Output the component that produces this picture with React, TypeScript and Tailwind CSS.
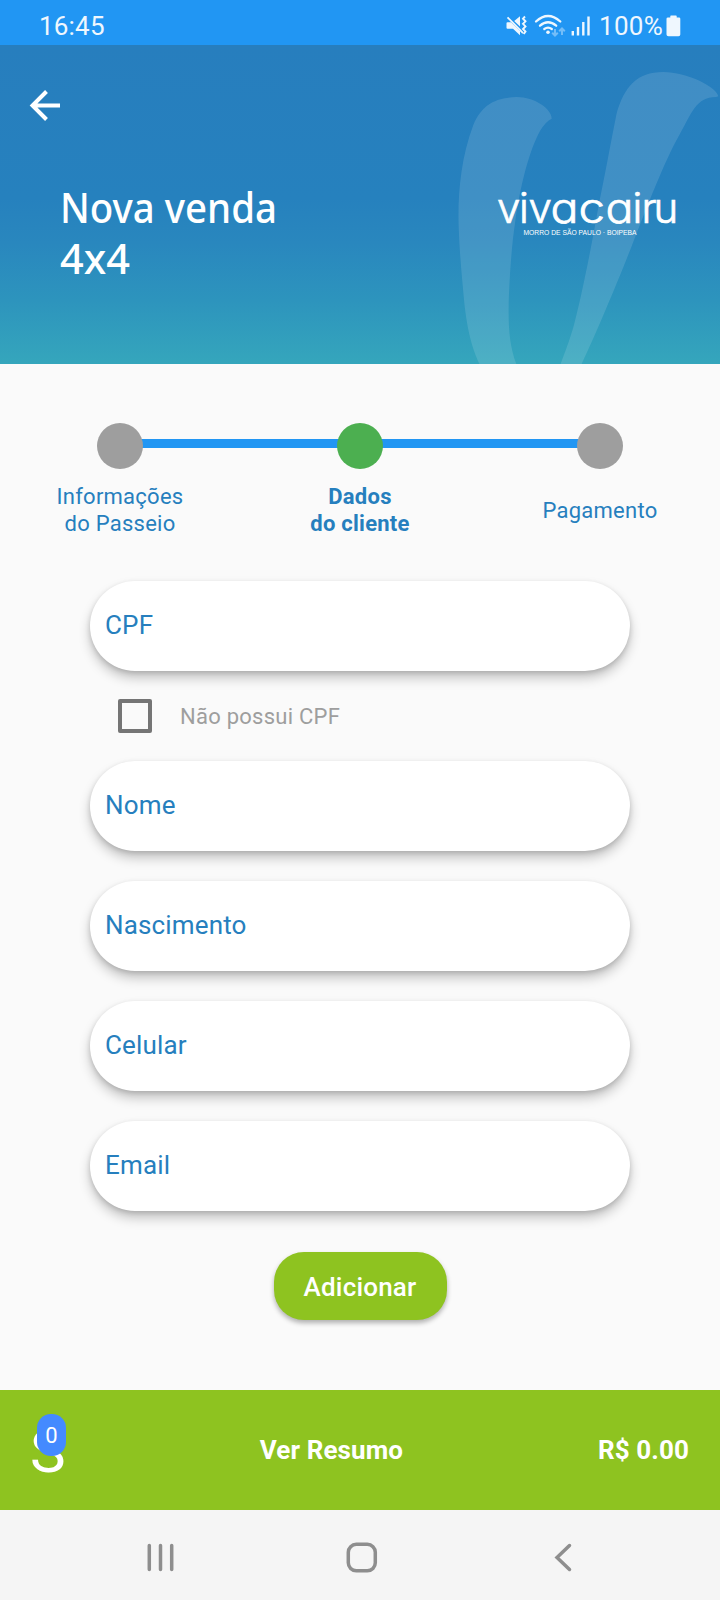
import React from "react";

function StatusBar() {
  return (
    <div className="flex h-[45px] items-start justify-between bg-[#2196f3] pl-[39px] pr-[38px] text-[#eff7fe]">
      <span className="mt-[10px] text-[26px] leading-[32px] tracking-[0.2px]">16:45</span>
      <div className="flex items-start">
        <svg className="h-[45px] w-[94px]" viewBox="0 0 94 45">
          <path fill="currentColor" d="M2.500 22.200h3.500L15 31v4.300l-7-6.500H2.500q-1 0-1-1v-4.600q0-1 1-1M9.200 21l5.800-4.700v10.200z" />
          <path d="M2.500 17.300 15 29.800l3 3.400" fill="none" stroke="currentColor" strokeWidth="1.800" />
          <path d="m20 16.500-2 2.200 2.500 2.600-2.500 2.500 2.500 2.600-2.500 2.600 2.500 2.500-1.800 2.500" fill="none" stroke="currentColor" strokeWidth="1.900" />
          <g fill="none" stroke="currentColor" strokeWidth="2.300" strokeLinecap="round">
            <path d="M31 21.500Q43 10.500 55.300 21.500M35 25.700q8-6.800 16.200 0M39.300 29q3.700-2.600 7.500 0" />
          </g>
          <circle cx="43" cy="32.300" r="1.800" fill="currentColor" />
          <path d="M50 29v6.500m-2.800-2.800 2.800 2.800 2.800-2.800M57 35v-6.500m-2.800 2.800 2.800-2.800 2.800 2.800" fill="none" stroke="currentColor" strokeWidth="2" opacity=".4" />
          <path d="M67.800 31v4.500M73 27v8.500M78.300 22v13.500M83.500 16.500v19" stroke="currentColor" strokeWidth="2.400" fill="none" />
        </svg>
        <span className="mt-[10px] w-[67px] whitespace-nowrap text-[26px] leading-[32px] tracking-[0.3px]">100%</span>
        <svg className="mr-[1px] mt-[15px] h-[22px] w-[15px]" viewBox="0 0 15 22">
          <path fill="currentColor" d="M5 .5h5q.7 0 .7.700V2.500H13q1.300 0 1.300 1.300v15.700q0 1.800-1.800 1.800h-10Q.5 21.300.5 19.500V3.800Q.5 2.500 2 2.500h2.300V1.200Q4.300.5 5 .5" />
        </svg>
      </div>
    </div>
  );
}

function Header() {
  return (
    <header className="relative h-[319px] overflow-hidden bg-[linear-gradient(180deg,#277ebe_0%,#2681be_48%,#2987be_62%,#2d94bd_80%,#35a6bc_100%)] text-white">
      <svg className="absolute right-0 top-0 h-[319px] w-[300px]" viewBox="0 -15 900 957">
        <g fill="#fff" fillOpacity=".12">
          <path d="M395 206C396 178 345 141 290 141C225 143 185 165 160 225C120 330 113 445 116 530C119 620 127 690 133 760C143 850 158 900 182 950H292C270 895 265 840 266 770C267 710 273 600 285 520C300 410 328 300 360 243Q377 214 395 206Z" />
          <path d="M895 139C890 110 800 66 730 66C650 66 614 110 590 190C570 290 552 390 536 465C520 560 485 740 462 824C448 875 433 910 419 950H481C520 870 600 680 640 575C680 475 730 340 778 255C815 190 827 142 888 141Z" />
        </g>
      </svg>
      <div className="relative flex h-full flex-col">
        <svg className="ml-[24px] mt-[42px] h-[36px] w-[44px]" viewBox="0 0 44 36" fill="none" stroke="currentColor" strokeWidth="4">
          <path d="M36 18.500H8.500M22.500 4.500 8.500 18.500 22.500 32.500" />
        </svg>
        <div className="flex items-start justify-between pl-[60px] pr-[36px] pt-[60px]">
          <h1 className="font-['Noto_Sans'] text-[41.500px] font-medium leading-[51px]">
            <svg className="h-[102px] w-[240px] overflow-visible" viewBox="0 0 240 102" fill="currentColor">
              <text x="0" y="40" textLength="217" lengthAdjust="spacingAndGlyphs">Nova venda</text>
              <text x="0" y="91" textLength="70" lengthAdjust="spacingAndGlyphs">4x4</text>
            </svg>
          </h1>
          <svg className="h-[60px] w-[190px] overflow-visible" viewBox="0 0 190 60" fill="currentColor">
            <text y="40" className="font-['Inter'] text-[42px] font-light [font-feature-settings:'cv11'_1]" stroke="currentColor" strokeWidth=".7">
              <tspan x="3 25 34.500">viv</tspan>
              <tspan x="56.500" textLength="28" lengthAdjust="spacingAndGlyphs">a</tspan>
              <tspan x="84.500" textLength="26.500" lengthAdjust="spacingAndGlyphs">c</tspan>
              <tspan x="111.500" textLength="28" lengthAdjust="spacingAndGlyphs">a</tspan>
              <tspan x="138.500 147.500 159.500">iru</tspan>
            </text>
            <text x="29.500" y="52" className="font-['Liberation_Sans'] text-[7px]" textLength="113" lengthAdjust="spacingAndGlyphs">MORRO DE SÃO PAULO · BOIPEBA</text>
          </svg>
        </div>
      </div>
    </header>
  );
}

function Step({ children, active = false }: { children: React.ReactNode; active?: boolean }) {
  return (
    <div className="flex w-[240px] flex-col items-center">
      <div className={active ? "size-[46px] rounded-full bg-[#4caf50]" : "size-[46px] rounded-full bg-[#9e9e9e]"} />
      <div className={active ? "mt-[14px] flex h-[54px] items-center text-center font-bold" : "mt-[14px] flex h-[54px] items-center text-center"}>
        <span>{children}</span>
      </div>
    </div>
  );
}

function Field({ label }: { label: string }) {
  return (
    <div className="flex h-[90px] items-center rounded-[45px] bg-white pb-[2px] pl-[15px] text-[26px] tracking-[0.150px] text-[#267fbe] shadow-[0_7px_12px_rgba(0,0,0,0.22),0_2px_5px_rgba(0,0,0,0.14)]">
      {label}
    </div>
  );
}

export default function App() {
  return (
    <div className="flex h-[1600px] w-[720px] flex-col overflow-hidden bg-[#fafafa] font-['Roboto',sans-serif]">
      <StatusBar />
      <Header />
      <main className="flex h-[1026px] flex-col items-center">
        <section className="relative mt-[59px] flex w-full text-[22px] leading-[27px] tracking-[0.250px] text-[#267fbe]">
          <div className="absolute left-[120px] right-[120px] top-[15.500px] h-[9.500px] bg-[#2196f3]" />
          <div className="relative flex w-full">
            <Step>Informações<br />do Passeio</Step>
            <Step active>Dados<br />do cliente</Step>
            <Step>Pagamento</Step>
          </div>
        </section>
        <form className="mt-[44px] flex w-[540px] flex-col">
          <Field label="CPF" />
          <label className="flex h-[90px] items-center pl-[28px] text-[22px] tracking-[0.250px] text-[#9e9e9e]">
            <span className="size-[34px] rounded-[2px] border-4 border-[#757575]" />
            <span className="ml-[28px]">Não possui CPF</span>
          </label>
          <div className="flex flex-col gap-[30px]">
            <Field label="Nome" />
            <Field label="Nascimento" />
            <Field label="Celular" />
            <Field label="Email" />
          </div>
        </form>
        <button className="mt-[41px] h-[68px] w-[173px] rounded-[30px] bg-[#8ec320] pt-[2px] text-[26px] font-medium tracking-[0.200px] text-white shadow-[0_3px_5px_rgba(0,0,0,0.3)]">Adicionar</button>
      </main>
      <div className="flex h-[120px] items-center justify-between bg-[#8ec320] pl-[30px] pr-[31px] text-[26px] font-bold tracking-[0.100px] text-white">
        <div className="relative w-[35px] pt-[4px]">
          <span className="block text-[60px] font-normal leading-[60px]">S</span>
          <span className="absolute left-[7px] top-[-4px] flex h-[42px] w-[29px] items-center justify-center rounded-[14px] bg-[#448aff] text-[22px] font-normal">0</span>
        </div>
        <span>Ver Resumo</span>
        <span>R$ 0.00</span>
      </div>
      <nav className="h-[90px] bg-[#f5f5f5]">
        <svg className="h-[90px] w-[720px]" viewBox="0 0 720 90" fill="none" stroke="#8e8e8e" strokeWidth="3.500" strokeLinecap="round">
          <path d="M149.300 35.500v24M160.500 35.500v24M171.700 35.500v24" />
          <rect x="348.300" y="34.300" width="27" height="26.500" rx="8" />
          <path d="M569.500 35.500 557 47.500l12.500 12" />
        </svg>
      </nav>
    </div>
  );
}
